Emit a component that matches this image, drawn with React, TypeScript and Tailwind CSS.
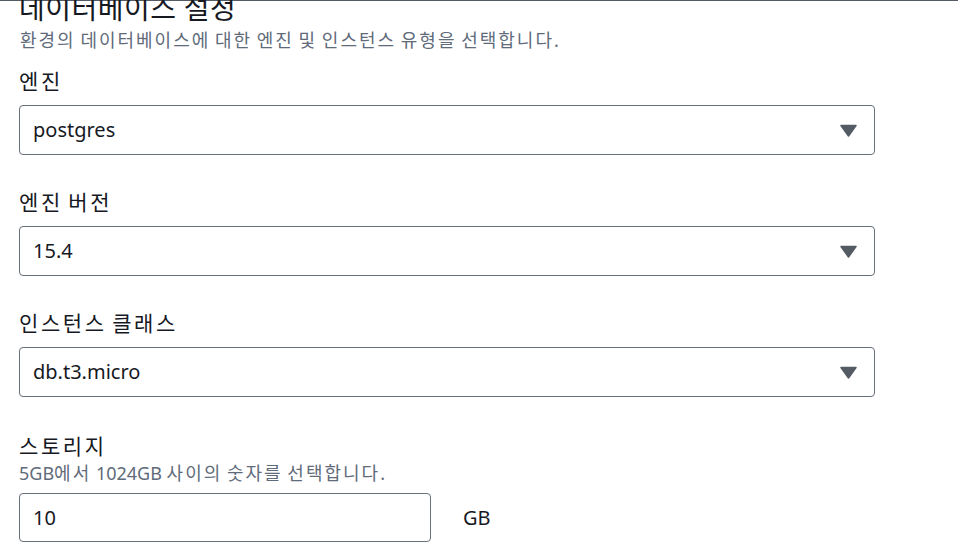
import React from "react";

const font = { fontFamily: '"Noto Sans", "Noto Sans CJK KR", sans-serif' };

// Hangul runs get extra tracking so they take the width the reference shows
const Ko: React.FC<{ text: string; track: string }> = ({ text, track }) => {
  const parts = text.split(/([\uAC00-\uD7A3]+)/);
  return (
    <>
      {parts.map((p, i) =>
        /[\uAC00-\uD7A3]/.test(p) ? (
          <span key={i} className={track}>
            {p}
          </span>
        ) : (
          <React.Fragment key={i}>{p}</React.Fragment>
        )
      )}
    </>
  );
};

type SelectFieldProps = {
  label: string;
  value: string;
};

const Caret = () => (
  <svg width="17" height="13" viewBox="0 0 17 13" className="shrink-0">
    <path d="M1 1.5 H16 L8.5 12 Z" fill="#545b64" stroke="#545b64" strokeWidth="1.5" strokeLinejoin="round" />
  </svg>
);

const SelectField: React.FC<SelectFieldProps> = ({ label, value }) => (
  <div className="flex flex-col">
    <label className="text-[21px] leading-[28px] text-[#16191f] mb-[10px]">
      <Ko text={label} track="tracking-[2.6px]" />
    </label>
    <div className="h-[50px] w-[856px] rounded-[4px] border border-[#687078] bg-white flex items-center justify-between pl-[13px] pr-[17px]">
      <span className="text-[20px] text-[#16191f]">{value}</span>
      <Caret />
    </div>
  </div>
);

export default function App() {
  const fields: SelectFieldProps[] = [
    { label: "엔진", value: "postgres" },
    { label: "엔진 버전", value: "15.4" },
    { label: "인스턴스 클래스", value: "db.t3.micro" },
  ];

  return (
    <div className="w-[960px] h-[556px] overflow-hidden bg-white" style={font}>
      <div className="border-t border-[#545b64] mr-[2px]">
        <div className="pl-[19px] -mt-[11px]">
          {/* Header */}
          <h2 className="text-[28px] leading-[36px] text-[#16191f]">
            <Ko text="데이터베이스 설정" track="tracking-[0.5px]" />
          </h2>
          <p className="mt-[2px] text-[18px] leading-[24px] text-[#5f6b7a] ml-px">
            <Ko text="환경의 데이터베이스에 대한 엔진 및 인스턴스 유형을 선택합니다." track="tracking-[2px]" />
          </p>

          {/* Fields */}
          <div className="mt-[15px] flex flex-col gap-[33px]">
            {fields.map((f) => (
              <SelectField key={f.label} label={f.label} value={f.value} />
            ))}

            <div className="flex flex-col mt-[2px]">
              <label className="text-[21px] leading-[28px] text-[#16191f]">
                <Ko text="스토리지" track="tracking-[2.6px]" />
              </label>
              <p className="mt-px text-[18px] leading-[24px] text-[#5f6b7a] mb-[8px]">
                <Ko text="5GB에서 1024GB 사이의 숫자를 선택합니다." track="tracking-[2px]" />
              </p>
              <div className="flex items-center gap-[32px]">
                <div className="h-[49px] w-[412px] rounded-[4px] border border-[#687078] bg-white flex items-center pl-[13px]">
                  <span className="text-[20px] text-[#16191f]">10</span>
                </div>
                <span className="text-[20px] text-[#16191f]">GB</span>
              </div>
            </div>
          </div>
        </div>
      </div>
    </div>
  );
}
